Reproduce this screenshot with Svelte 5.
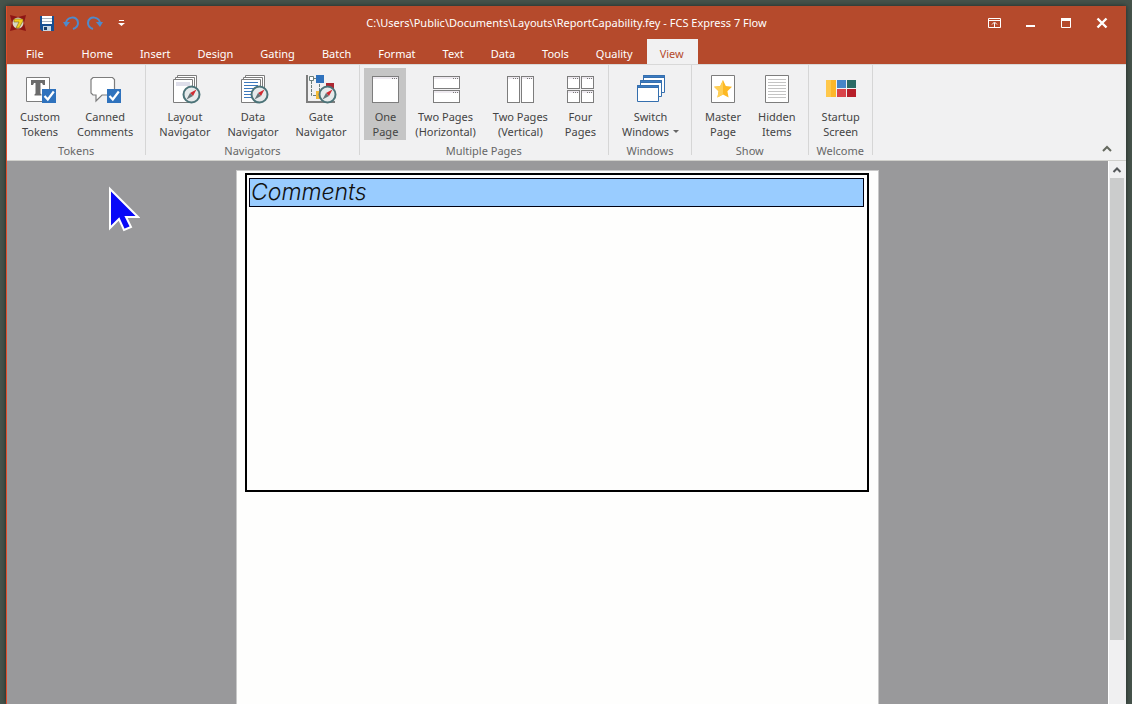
<script lang="ts">
  type Command = { icon: string; lines: string[]; menu?: boolean };
  type Group = { title: string; commands: Command[] };

  const tabs = ["Home", "Insert", "Design", "Gating", "Batch", "Format", "Text", "Data", "Tools", "Quality", "View"];

  const groups: Group[] = [
    {
      title: "Tokens",
      commands: [
        { icon: "token", lines: ["Custom", "Tokens"] },
        { icon: "comment", lines: ["Canned", "Comments"] },
      ],
    },
    {
      title: "Navigators",
      commands: [
        { icon: "layout", lines: ["Layout", "Navigator"] },
        { icon: "data", lines: ["Data", "Navigator"] },
        { icon: "gate", lines: ["Gate", "Navigator"] },
      ],
    },
    {
      title: "Multiple Pages",
      commands: [
        { icon: "one", lines: ["One", "Page"] },
        { icon: "horizontal", lines: ["Two Pages", "(Horizontal)"] },
        { icon: "vertical", lines: ["Two Pages", "(Vertical)"] },
        { icon: "four", lines: ["Four", "Pages"] },
      ],
    },
    { title: "Windows", commands: [{ icon: "windows", lines: ["Switch", "Windows"], menu: true }] },
    {
      title: "Show",
      commands: [
        { icon: "master", lines: ["Master", "Page"] },
        { icon: "hidden", lines: ["Hidden", "Items"] },
      ],
    },
    { title: "Welcome", commands: [{ icon: "startup", lines: ["Startup", "Screen"] }] },
  ];

  // x, y, width, height of each pane in the page icons
  const panes: Record<string, number[][]> = {
    one: [[3, 3, 27, 27]],
    horizontal: [[3, 3, 27, 13], [3, 17, 27, 13]],
    vertical: [[3, 3, 13, 27], [17, 3, 13, 27]],
    four: [[3, 3, 13, 13], [17, 3, 13, 13], [3, 17, 13, 13], [17, 17, 13, 13]],
  };

  let activeTab = $state("View");
  let pageMode = $state("one");

  function run(command: Command) {
    if (command.icon in panes) pageMode = command.icon;
  }
</script>

{#snippet checkBadge()}
  <path fill="#2f72bd" d="M18 16h14v14H18z" />
  <path fill="none" stroke="#fff" stroke-width="2.2" d="M20.5 23l3.3 3.5 6-8" />
{/snippet}

{#snippet compass()}
  <circle cx="22.5" cy="21.5" r="8" fill="#e6eaeb" stroke="#4c7378" stroke-width="2" />
  <path fill="#d02a31" d="M27.5 16.5l-3.5 6.5-3-3z" />
  <path fill="#667477" d="M17.5 26.5l3.500-6.500 3 3z" />
{/snippet}

{#snippet sheets()}
  <g fill="#fff" stroke="#7d7d7d">
    <path d="M8.500 2.500h19v24h-19z" />
    <path d="M6.500 4.500h19v24h-19z" />
    <path d="M4.500 6.500h19v23h-19z" />
  </g>
{/snippet}

{#snippet glyph(name: string)}
  <svg class="icon" viewBox="0 0 32 32" aria-hidden="true">
    {#if name === "token"}
      <path fill="#fff" stroke="#7d7d7d" d="M2.500 4.500h23v24h-23z" />
      <path fill="#6c6c6c" d="M7 7h14v5h-2l-1-2h-1.500v10.500l1 1v1h-7v-1l1-1V10H10l-1 2H7z" />
      {@render checkBadge()}
    {:else if name === "comment"}
      <path fill="#fff" stroke="#7d7d7d" stroke-width="1.200" d="M4 4.500h19.500l2 2V20l-2 2H13l-6 6v-6H4l-2-2V6.500z" />
      {@render checkBadge()}
    {:else if name === "layout"}
      {@render sheets()}
      <path fill="#dedeea" d="M7 9h14v4H7z" />
      {@render compass()}
    {:else if name === "data"}
      {@render sheets()}
      <path stroke="#3c79bd" d="M7 9.500h14M7 12.500h14M7 15.500h11M7 18.500h9M7 21.500h8M7 24.500h9" />
      {@render compass()}
    {:else if name === "gate"}
      <path fill="none" stroke="#7d7d7d" stroke-width="2" d="M2 2v27h28" />
      <path fill="none" stroke="#6a7d79" stroke-dasharray="3 1" d="M6.500 8v14.500h5M9 5.500h3M14.500 11v7h5" />
      <path fill="#fff" stroke="#6a7d79" d="M4.500 3.500h4v4h-4z" />
      <path fill="#2f72bd" d="M11 2h8v8h-8z" />
      <path fill="#f4bb38" d="M11 18h8v8h-8z" />
      <path fill="#ad2731" d="M21 10h8v6h-8z" />
      {@render compass()}
    {:else if name in panes}
      {#each panes[name] as [x, y, w, h]}
        <rect x={x + 0.5} y={y + 0.5} width={w - 1} height={h - 1} fill="#fff" stroke="#7d7d7d" />
        <rect x={x + 1} y={y + 1} width={w - 2} height="2" fill="#eeeaf0" />
        <path stroke="#777" stroke-dasharray="1 1" d="M{x + w - 7} {y + 2.5}h5" />
      {/each}
    {:else if name === "windows"}
      <g fill="#fff" stroke="#356fae">
        <path d="M9.500 2.500h21v17h-21z" /><path fill="#3c7bc2" d="M9.500 2.500h21v2h-21z" />
        <path d="M6.500 7.500h21v16h-21z" /><path fill="#3c7bc2" d="M6.500 7.500h21v2h-21z" />
        <path d="M3.500 12.500h21v16h-21z" /><path fill="#3c7bc2" d="M3.500 12.500h21v2h-21z" />
      </g>
    {:else if name === "master"}
      <path fill="#fff" stroke="#7d7d7d" d="M4.500 2.500h23v27h-23z" />
      <path fill="#fdb924" d="M16 7l2.800 6 6.200.8-4.600 4.400 1.200 6.300-5.600-3.100-5.600 3.100 1.200-6.300L7 13.800l6.200-.8z" />
      <path fill="#ffcf55" d="M16 7v14.400l-5.600 3.100 1.200-6.300L7 13.800l6.200-.8z" />
    {:else if name === "hidden"}
      <path fill="#fff" stroke="#7d7d7d" d="M4.500 2.500h23v27h-23z" />
      <path stroke="#c4c4c4" d="M7 6.500h18M7 9.500h18M7 12.500h18M7 15.500h18M7 18.500h18M7 21.500h18M7 24.500h18" />
    {:else if name === "startup"}
      <path fill="#ffc84b" d="M1 7h5v17H1z" /><path fill="#fdb72a" d="M6 7h5v17H6z" />
      <path fill="#4685c9" d="M12 7h9v8h-9z" /><path fill="#2b6a65" d="M22 7h9v8h-9z" />
      <path fill="#d9444a" d="M12 16h9v8h-9z" /><path fill="#b71f2a" d="M22 16h9v8h-9z" />
    {/if}
  </svg>
{/snippet}

<div class="desktop">
  <div class="window">
    <header class="titlebar">
      <div class="quick">
        <svg class="app" viewBox="0 0 16 16" aria-hidden="true">
          <path fill="#8e1515" d="M0 0l8 2 8-2-2 8 2 8-8-2-8 2 2-8z" />
          <circle cx="8" cy="8" r="5.500" fill="#d9d8c4" />
          <path fill="#f2cf22" stroke="#806515" stroke-width=".6" d="M4 4h9v2l-4 7H6l3-6H4z" />
        </svg>
        <button aria-label="Save">
          <svg viewBox="0 0 16 16">
            <path fill="#164f91" d="M1 1h14v15H3l-2-2z" />
            <path fill="#fff" d="M3 1h10v8H3z" />
            <path stroke="#a9b4bf" d="M3 3.500h10M3 6.500h10" />
            <path fill="#c8d7e4" d="M4 11h8v5H4z" /><path fill="#173d65" d="M5 12h3v3H5z" />
          </svg>
        </button>
        <button aria-label="Undo">
          <svg viewBox="0 0 16 16">
            <path fill="none" stroke="#4f8acb" stroke-width="2" d="M3 10c-1-9 12-10 12-2 0 3-2 5-5 6" />
            <path fill="#4f8acb" d="M0 7h7l-4 5z" />
          </svg>
        </button>
        <button aria-label="Redo">
          <svg viewBox="0 0 16 16">
            <path fill="none" stroke="#4f8acb" stroke-width="2" d="M13 10c1-9-12-10-12-2 0 3 2 5 5 6" />
            <path fill="#4f8acb" d="M16 7H9l4 5z" />
          </svg>
        </button>
        <button aria-label="Customize toolbar">
          <svg viewBox="0 0 16 16"><path fill="#fff" d="M6 5h5v1H6zM5 8h7l-3.500 3z" /></svg>
        </button>
      </div>
      <h1>C:\Users\Public\Documents\Layouts\ReportCapability.fey - FCS Express 7 Flow</h1>
      <div class="controls">
        <button aria-label="Ribbon display options">
          <svg viewBox="0 0 16 16"><path fill="none" stroke="#fff" d="M2.500 3.500h12v9h-12zM2 5.500h12M8.500 12V8M6 9.500L8.500 7 11 9.500" /></svg>
        </button>
        <button aria-label="Minimize"><svg viewBox="0 0 16 16"><path fill="#fff" d="M4 10h9v2H4z" /></svg></button>
        <button aria-label="Maximize">
          <svg viewBox="0 0 16 16"><path fill="none" stroke="#fff" d="M3.500 3.500h9v9h-9z" /><path fill="#fff" d="M3 3h10v3H3z" /></svg>
        </button>
        <button aria-label="Close"><svg viewBox="0 0 16 16"><path stroke="#fff" stroke-width="2.400" d="M3.500 3.500l9 9M12.500 3.500l-9 9" /></svg></button>
      </div>
    </header>

    <nav class="tabs">
      <button class="file">File</button>
      {#each tabs as tab}
        <button class:active={tab === activeTab} onclick={() => (activeTab = tab)}>{tab}</button>
      {/each}
    </nav>

    <div class="ribbon">
      {#each groups as group}
        <section class="group">
          <div class="commands">
            {#each group.commands as command}
              <button class="command" class:pressed={command.icon === pageMode} onclick={() => run(command)}>
                {@render glyph(command.icon)}
                <span>{command.lines[0]}</span>
                <span class:menu={command.menu}>{command.lines[1]}</span>
              </button>
            {/each}
          </div>
          <h2>{group.title}</h2>
        </section>
      {/each}
      <button class="collapse" aria-label="Collapse ribbon">
        <svg viewBox="0 0 10 10"><path fill="none" stroke="#65695f" stroke-width="2" d="M1 7l4-4 4 4" /></svg>
      </button>
    </div>

    <main>
      <div class="canvas">
        <article class="page">
          <div class="frame">
            <h3>Comments</h3>
          </div>
        </article>
        <svg class="pointer" viewBox="0 0 32 46" aria-hidden="true">
          <path fill="#0808f8" stroke="#fff" stroke-width="2" d="M2 3v39l9-9 5 11 7-3-5-10h12z" />
        </svg>
      </div>
      <div class="scrollbar">
        <button aria-label="Scroll up">
          <svg viewBox="0 0 10 10"><path fill="none" stroke="#55585a" stroke-width="2" d="M1.500 7L5 3.500 8.500 7" /></svg>
        </button>
        <div class="thumb"></div>
      </div>
    </main>
  </div>
</div>

<style>
  :global(body) {
    margin: 0;
    background: #46534b;
  }
  .desktop {
    box-sizing: border-box;
    height: 100vh;
    padding: 6px 6px 0;
    overflow: hidden;
    background: #46534b;
    font: 11px/15px "Noto Sans", sans-serif;
    color: #444;
  }
  .window {
    display: flex;
    flex-direction: column;
    height: 100%;
    border-left: 1px solid #e04e2c;
    box-shadow: 0 0 5px #1f2925;
  }
  button {
    margin: 0;
    padding: 0;
    border: 0;
    background: none;
    color: inherit;
    font: inherit;
  }
  svg { display: block; }
  h1, h2, h3 { margin: 0; font: inherit; }

  .titlebar {
    display: grid;
    grid-template-columns: 1fr auto 1fr;
    align-items: center;
    height: 33px;
    background: #b54a2c;
    color: #fff;
  }
  .titlebar svg { width: 16px; height: 16px; }
  .quick {
    display: flex;
    gap: 8px;
    padding-left: 3px;
  }
  .quick .app { margin-right: 5px; }
  .quick button:last-child { margin-left: 2px; }
  .controls {
    display: flex;
    justify-content: flex-end;
    gap: 20px;
    padding-right: 16px;
  }

  .tabs {
    display: flex;
    height: 25px;
    background: #b54a2c;
    color: #fff;
  }
  .tabs button { padding: 3px 14px 0 13px; }
  .tabs .file { padding: 3px 25px 0 19px; }
  .tabs .active {
    background: #f1f1f2;
    color: #b54a2c;
  }

  .ribbon {
    display: flex;
    flex: none;
    height: 95px;
    border-top: 1px solid #d8d8d8;
    border-bottom: 1px solid #d0d0cc;
    background: #f1f1f2;
  }
  .group {
    display: flex;
    flex-direction: column;
    height: 90px;
    padding: 0 4px;
    border-right: 1px solid #d6d6d6;
    text-align: center;
  }
  .commands {
    display: flex;
    justify-content: center;
    padding-top: 3px;
  }
  .command {
    display: flex;
    flex-direction: column;
    align-items: center;
    min-width: 42px;
    height: 72px;
    padding: 5px 8px 0 9px;
    white-space: nowrap;
  }
  .pressed { background: #c5c5c5; }
  .icon {
    width: 32px;
    height: 32px;
    margin: 0 -8px 4px;
  }
  .menu::after {
    content: "";
    display: inline-block;
    margin-left: 4px;
    border: 3px solid transparent;
    border-top-color: #666;
  }
  .group h2 { color: #666; padding-top: 3px; }
  .collapse {
    align-self: flex-end;
    margin: 0 14px 6px auto;
  }
  .collapse svg, .scrollbar svg { width: 10px; height: 10px; }

  main {
    display: flex;
    flex: 1;
    min-height: 0;
  }
  .canvas {
    position: relative;
    flex: 1;
    padding: 9px 16px 0;
    overflow: hidden;
    background: #99999b;
  }
  .page {
    box-sizing: border-box;
    max-width: 643px;
    min-height: 832px;
    margin: 0 auto;
    padding: 2px 9px 0 8px;
    border: 1px solid #c9c9c9;
    background: #fefefd;
  }
  .frame {
    box-sizing: border-box;
    min-height: 319px;
    padding: 3px 3px 0 2px;
    border: 2px solid #000;
  }
  .frame h3 {
    padding: 0 1px;
    border: 1px solid #001;
    background: #99ccff;
    color: #111;
    font: italic 300 23px/27px Inter, sans-serif;
  }
  .pointer {
    position: absolute;
    top: 25px;
    left: 101px;
    width: 32px;
    height: 46px;
  }
  .scrollbar {
    display: flex;
    flex-direction: column;
    width: 14px;
    padding: 0 2px 0 1px;
    border-left: 1px solid #fff;
    background: #f0f0f1;
  }
  .scrollbar button {
    display: grid;
    place-items: center;
    height: 17px;
  }
  .thumb {
    flex: 0 0 85%;
    background: #cbcccc;
  }
</style>
